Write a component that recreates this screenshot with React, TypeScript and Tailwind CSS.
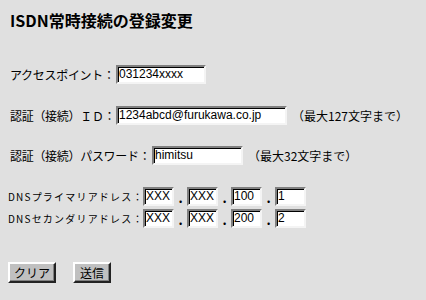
import React from "react";

const font = { fontFamily: '"Noto Sans CJK JP", "Liberation Sans", sans-serif' };

const Field: React.FC<{ value: string; className: string }> = ({ value, className }) => (
  <div
    className={`h-[19px] bg-white border-2 border-t-[#808080] border-l-[#808080] border-r-[#f4f4f4] border-b-[#f4f4f4] shadow-[inset_1px_1px_0_#000] pl-[1px] text-[12px] leading-[15px] text-black overflow-hidden whitespace-nowrap font-['Liberation_Sans',sans-serif] ${className}`}
  >
    {value}
  </div>
);

const Button: React.FC<{ label: string; className: string }> = ({ label, className }) => (
  <div
    className={`h-[21px] bg-[#c0c0c0] border-2 border-t-white border-l-white border-r-[#222] border-b-[#222] shadow-[inset_-1px_-1px_0_#808080] flex items-center justify-center text-[12px] text-black ${className}`}
  >
    {label}
  </div>
);

const octets = (a: string[]) => (
  <div className="flex items-center">
    {a.map((v, i) => (
      <React.Fragment key={i}>
        {i > 0 && <span className="w-[13px] text-center text-[13px] font-bold leading-[19px] pt-[2px]">.</span>}
        <Field value={v} className="w-[31px]" />
      </React.Fragment>
    ))}
  </div>
);

export default function App() {
  return (
    <div className="w-[426px] h-[300px] bg-[#e0e0e0] text-black pl-[10px] pt-[10px]" style={font}>
      <h1 className="h-[20px] leading-[20px] text-[16px] font-bold whitespace-nowrap">ISDN常時接続の登録変更</h1>

      {/* access point */}
      <div className="flex items-center mt-[35px] h-[19px] text-[12px]">
        <span className="w-[106px] whitespace-nowrap tracking-[-0.3px]">アクセスポイント：</span>
        <Field value="031234xxxx" className="w-[90px]" />
      </div>

      {/* id */}
      <div className="flex items-center mt-[22px] h-[19px] text-[12px]">
        <span className="w-[106px] whitespace-nowrap tracking-[-0.3px]">認証（接続）ＩＤ：</span>
        <Field value="1234abcd@furukawa.co.jp" className="w-[171px]" />
        <span className="ml-[5px] whitespace-nowrap">（最大127文字まで）</span>
      </div>

      {/* password */}
      <div className="flex items-center mt-[21px] h-[19px] text-[12px]">
        <span className="w-[142px] whitespace-nowrap tracking-[-0.3px]">認証（接続）パスワード：</span>
        <Field value="himitsu" className="w-[91px]" />
        <span className="ml-[5px] whitespace-nowrap">（最大32文字まで）</span>
      </div>

      {/* dns */}
      <div className="flex items-center mt-[22px] h-[19px] text-[10px]">
        <span className="w-[133px] whitespace-nowrap tracking-[1.2px] -ml-[2px]">DNSプライマリアドレス：</span>
        <div className="ml-[2px]">{octets(["XXX", "XXX", "100", "1"])}</div>
      </div>
      <div className="flex items-center mt-[3px] h-[19px] text-[10px]">
        <span className="w-[133px] whitespace-nowrap tracking-[1.2px] -ml-[2px]">DNSセカンダリアドレス：</span>
        <div className="ml-[2px]">{octets(["XXX", "XXX", "200", "2"])}</div>
      </div>

      <div className="flex mt-[34px] -ml-[2px]">
        <Button label="クリア" className="w-[48px]" />
        <Button label="送信" className="w-[38px] ml-[17px]" />
      </div>
    </div>
  );
}
